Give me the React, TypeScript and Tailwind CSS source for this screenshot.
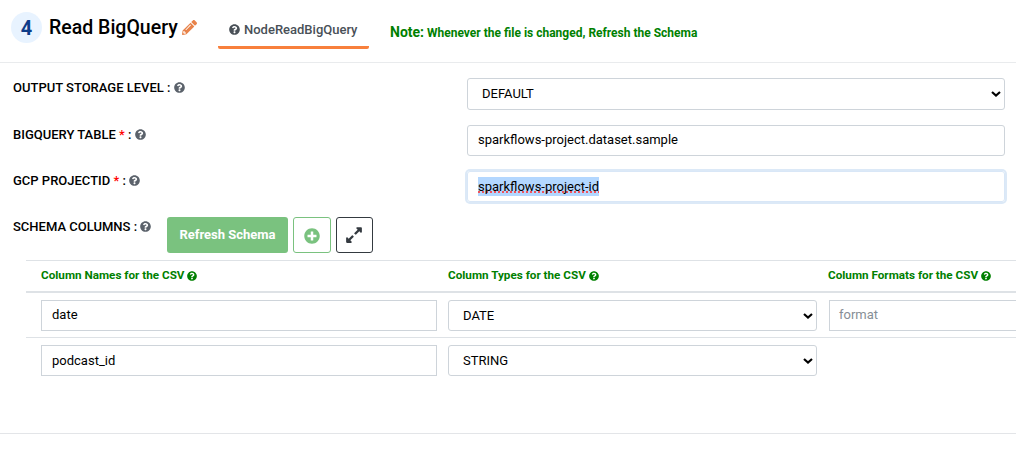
import React from "react";
import { FaExpandAlt, FaPencilAlt, FaPlusCircle, FaQuestionCircle } from "react-icons/fa";

function Chevron() {
  return (
    <svg width="10" height="6" viewBox="0 0 10 6" fill="none" stroke="#000" strokeWidth="2.1" className="shrink-0">
      <path d="M1 0.9 5 4.6 9 0.9" />
    </svg>
  );
}

function Label({ text, required, className }: { text: string; required?: boolean; className: string }) {
  return (
    <div className={`flex w-[454px] shrink-0 items-center text-[13px] leading-4 font-medium text-black ${className}`}>
      <span className="whitespace-pre">
        {text}
        {required && <span className="text-[#f00]"> *</span>} :
      </span>
      <FaQuestionCircle className="mb-px ml-[3px] size-[11px] text-[#5b626b]" />
    </div>
  );
}

function Select({ value, className }: { value: string; className: string }) {
  return (
    <div className={`flex items-center justify-between rounded-[3px] border border-[#ced4da] pr-[3px] pl-3.5 ${className}`}>
      <span>{value}</span>
      <Chevron />
    </div>
  );
}

function HeadCell({ text, className }: { text: string; className: string }) {
  return (
    <div className={`flex items-center text-[11.7px] font-bold whitespace-nowrap text-[#008000] ${className}`}>
      <span>{text}</span>
      <FaQuestionCircle className="mb-px ml-[3px] size-[10px]" />
    </div>
  );
}

export default function App() {
  return (
    <div className="flex h-[467px] w-[1016px] flex-col overflow-hidden bg-white font-['Roboto',sans-serif] text-[13px] text-black">
      <header className="flex h-[63px] shrink-0 items-start border-b border-[#e9ebed] pl-[11px]">
        <div className="mt-3 flex size-[31px] items-center justify-center rounded-full bg-[#e8f3ff] text-[20px] font-bold text-[#0d3c88]">4</div>
        <h1 className="mt-4 ml-[7px] w-[129px] text-[19.5px] leading-6 font-medium whitespace-nowrap">Read BigQuery</h1>
        <FaPencilAlt className="mt-5 ml-1 size-[15px] text-[#e8834a]" />
        <div className="ml-[21px] flex h-[49px] w-[151px] items-center rounded-b-[2px] border-b-[3px] border-[#f8803c] pt-[13px] pl-[11px] text-[#495057]">
          <FaQuestionCircle className="size-[11px]" />
          <span className="ml-1 text-[13px] font-medium">NodeReadBigQuery</span>
        </div>
        <p className="mt-6 ml-[21px] text-[12px] leading-4 font-bold whitespace-nowrap text-[#008000]">
          <span className="text-[14px]">Note:</span> Whenever the file is changed, Refresh the Schema
        </p>
      </header>

      <main className="flex h-[371px] shrink-0 flex-col border-b border-[#e3e5e8] pt-[15px]">
        <div className="flex pl-[13px]">
          <Label text="OUTPUT STORAGE LEVEL" className="h-5" />
          <Select value="DEFAULT" className="h-8 w-[538px]" />
        </div>
        <div className="mt-[15px] flex pl-[13px]">
          <Label text="BIGQUERY TABLE" required className="h-5" />
          <div className="flex h-[31px] w-[538px] items-center rounded-[3px] border border-[#ced4da] pb-0.5 pl-2.5">sparkflows-project.dataset.sample</div>
        </div>
        <div className="mt-[15px] flex pl-[13px]">
          <Label text="GCP PROJECTID" required className="h-5" />
          <div className="flex h-[31px] w-[538px] items-center rounded-[3px] border border-[#d9e7f7] pl-2.5 ring-2 ring-[#dce9f7]">
            <span className="flex h-[19px] items-center bg-[#b3d7ff] underline decoration-[#f0525c] decoration-dotted decoration-2 underline-offset-1 [text-decoration-skip-ink:none]">
              sparkflows-project-id
            </span>
          </div>
        </div>
        <div className="mt-[15px] flex pl-[13px]">
          <div className="w-[154px]">
            <Label text="SCHEMA COLUMNS" className="h-5" />
          </div>
          <button className="h-9 w-[121px] rounded-[3px] bg-[#7ac27f] text-[13px] font-bold whitespace-nowrap text-white">Refresh Schema</button>
          <button className="ml-[5px] flex h-9 w-[38px] items-center justify-center rounded-[3px] border border-[#7ac27f] pt-px text-[#7ac27f]">
            <FaPlusCircle className="size-4" />
          </button>
          <button className="ml-[5px] flex h-9 w-[37px] items-center justify-center rounded-[3px] border border-[#343a40] pr-px text-[#343a40]">
            <FaExpandAlt className="size-[18px]" />
          </button>
        </div>

        <section className="mt-[7px] ml-[26px] w-[990px] overflow-hidden border-t border-[#dee2e6]">
          <div className="flex h-8 border-b-2 border-[#dee2e6] pl-[15px]">
            <HeadCell text="Column Names for the CSV" className="w-[407px]" />
            <HeadCell text="Column Types for the CSV" className="w-[380px]" />
            <HeadCell text="Column Formats for the CSV" className="" />
          </div>
          <div className="flex h-[45px] border-b border-[#dee2e6] pt-[7px] pl-[15px]">
            <div className="flex h-[31px] w-[396px] shrink-0 items-center border border-[#ced4da] pb-0.5 pl-2.5">date</div>
            <Select value="DATE" className="ml-[11px] h-[31px] w-[369px] shrink-0" />
            <div className="ml-3 flex h-[31px] w-[220px] shrink-0 items-center border border-[#ced4da] pb-0.5 pl-[9px] text-[#868e96]">format</div>
          </div>
          <div className="flex pt-[7px] pl-[15px]">
            <div className="flex h-[31px] w-[396px] shrink-0 items-center border border-[#ced4da] pl-2.5">podcast_id</div>
            <Select value="STRING" className="ml-[11px] h-[31px] w-[369px] shrink-0" />
          </div>
        </section>
      </main>
    </div>
  );
}
